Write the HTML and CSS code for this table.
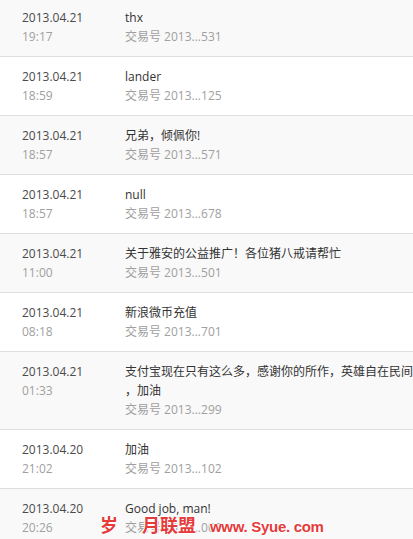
FILE: index.html
```html
<!DOCTYPE html>
<html lang="zh-CN">
<head>
    <meta charset="UTF-8">
    <meta name="viewport" content="width=device-width, initial-scale=1.0">
    <title>交易记录</title>
    <link rel="stylesheet" href="styles.css">
</head>
<body>
    <ul class="records">
        <li class="record">
            <div class="when"><span class="date">2013.04.21</span><span class="time">19:17</span></div>
            <div class="what"><span class="title">thx</span><span class="trade">交易号 2013...531</span></div>
        </li>
        <li class="record">
            <div class="when"><span class="date">2013.04.21</span><span class="time">18:59</span></div>
            <div class="what"><span class="title">lander</span><span class="trade">交易号 2013...125</span></div>
        </li>
        <li class="record">
            <div class="when"><span class="date">2013.04.21</span><span class="time">18:57</span></div>
            <div class="what"><span class="title">兄弟，倾佩你!</span><span class="trade">交易号 2013...571</span></div>
        </li>
        <li class="record">
            <div class="when"><span class="date">2013.04.21</span><span class="time">18:57</span></div>
            <div class="what"><span class="title">null</span><span class="trade">交易号 2013...678</span></div>
        </li>
        <li class="record">
            <div class="when"><span class="date">2013.04.21</span><span class="time">11:00</span></div>
            <div class="what"><span class="title">关于雅安的公益推广！各位猪八戒请帮忙</span><span class="trade">交易号 2013...501</span></div>
        </li>
        <li class="record">
            <div class="when"><span class="date">2013.04.21</span><span class="time">08:18</span></div>
            <div class="what"><span class="title">新浪微币充值</span><span class="trade">交易号 2013...701</span></div>
        </li>
        <li class="record">
            <div class="when"><span class="date">2013.04.21</span><span class="time">01:33</span></div>
            <div class="what"><span class="title">支付宝现在只有这么多，感谢你的所作，英雄自在民间<br>，加油</span><span class="trade">交易号 2013...299</span></div>
        </li>
        <li class="record">
            <div class="when"><span class="date">2013.04.20</span><span class="time">21:02</span></div>
            <div class="what"><span class="title">加油</span><span class="trade">交易号 2013...102</span></div>
        </li>
        <li class="record">
            <div class="when"><span class="date">2013.04.20</span><span class="time">20:26</span></div>
            <div class="what"><span class="title">Good job, man!</span><span class="trade">交易号 2013...000</span></div>
        </li>
    </ul>

    <div class="watermark"><span class="wm-cn">岁</span><span class="wm-cn wm-gap">月联盟</span><span class="wm-url">www. Syue. com</span></div>
</body>
</html>
```

FILE: styles.css
```css
body {
    margin: 0;
    font-family: "Open Sans", "Noto Sans CJK SC", sans-serif;
    font-size: 12px;
    background-color: #fff;
    color: #333;
    overflow: hidden;
}
.records {
    list-style: none;
    margin: -2px 0 0;
    padding: 0;
}
.record {
    display: flex;
    padding: 10px 0;
    line-height: 19px;
    border-bottom: 1px solid #dedede;
}
.record:nth-child(odd) {
    background-color: #f9f9f9;
}
.when {
    width: 103px;
    padding-left: 22px;
    flex-shrink: 0;
}
.when span, .what span {
    display: block;
}
.date {
    color: #4a4a4a;
}
.time {
    color: #a0a0a0;
}
.what {
    flex: 1;
    white-space: nowrap;
}
.title {
    color: #333;
}
.trade {
    color: #a0a0a0;
}
.watermark {
    position: absolute;
    left: 100px;
    top: 514px;
    display: flex;
    align-items: baseline;
    color: #e53b3b;
    font-weight: bold;
    text-shadow: 1px 0 #fff, -1px 0 #fff, 0 1px #fff, 0 -1px #fff;
}
.wm-cn {
    font-family: "Noto Sans CJK SC", sans-serif;
    font-size: 18px;
    line-height: 20px;
}
.wm-gap {
    margin-left: 24px;
}
.wm-url {
    margin-left: 14px;
    font-family: "Liberation Sans", sans-serif;
    font-size: 15px;
    letter-spacing: -0.3px;
}
```
